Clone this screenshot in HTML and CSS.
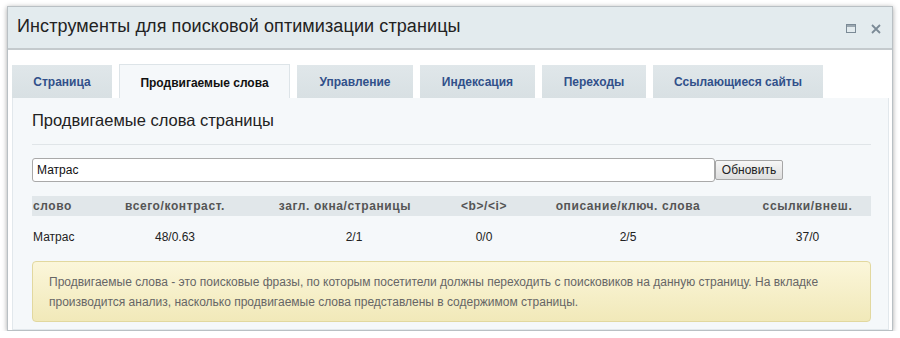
FILE: index.html
```html
<!DOCTYPE html>
<html lang="ru">
<head>
<meta charset="utf-8">
<title>SEO</title>
<link rel="stylesheet" href="styles.css">
</head>
<body>
<div class="window">
  <div class="titlebar">
    <div class="title">Инструменты для поисковой оптимизации страницы</div>
    <div class="controls">
      <svg class="ico" width="10" height="10" viewBox="0 0 10 10"><rect x="0.5" y="0.5" width="9" height="8" fill="none" stroke="#7b8a96" stroke-width="1"/><line x1="0" y1="2" x2="10" y2="2" stroke="#7b8a96" stroke-width="1.4"/></svg>
      <svg class="ico" width="10" height="10" viewBox="0 0 10 10"><path d="M1 1 L9 9 M9 1 L1 9" stroke="#7b8a96" stroke-width="1.8"/></svg>
    </div>
  </div>
  <div class="body">
    <div class="tabs">
      <div class="tab w1">Страница</div>
      <div class="tab active w2">Продвигаемые слова</div>
      <div class="tab w3">Управление</div>
      <div class="tab w4">Индексация</div>
      <div class="tab w5">Переходы</div>
      <div class="tab w6">Ссылающиеся сайты</div>
    </div>
    <div class="panel">
      <h2 class="heading">Продвигаемые слова страницы</h2>
      <div class="form">
        <input class="field" type="text" value="Матрас">
        <button class="btn">Обновить</button>
      </div>
      <div class="grid head">
        <div class="c1">слово</div>
        <div>всего/контраст.</div>
        <div>загл. окна/страницы</div>
        <div>&lt;b&gt;/&lt;i&gt;</div>
        <div>описание/ключ. слова</div>
        <div>ссылки/внеш.</div>
      </div>
      <div class="grid row">
        <div class="c1">Матрас</div>
        <div>48/0.63</div>
        <div class="off">2/1</div>
        <div>0/0</div>
        <div>2/5</div>
        <div>37/0</div>
      </div>
      <div class="note">Продвигаемые слова - это поисковые фразы, по которым посетители должны переходить с поисковиков на данную страницу. На вкладке производится анализ, насколько продвигаемые слова представлены в содержимом страницы.</div>
    </div>
  </div>
</div>
</body>
</html>
```
FILE: styles.css
```css
html, body { margin: 0; padding: 0; background: #fff; }
body { font-family: "Liberation Sans", Arial, sans-serif; padding: 6px 7px 0 7px; }
.window {
  width: 884px;
  height: 323px;
  border: 1px solid #b9c0c4;
  box-shadow: 0 1px 5px rgba(0,0,0,0.35);
  background: #fff;
  display: flex;
  flex-direction: column;
}
.titlebar {
  height: 41px;
  background: #e3ebee;
  border-bottom: 2px solid #c4cacd;
  display: flex;
  align-items: center;
  justify-content: space-between;
  padding: 0 11px 0 9px;
}
.title { font-size: 18px; color: #222; letter-spacing: 0.1px; margin-top: -2px; }
.controls { display: flex; gap: 15px; align-items: center; margin-top: 2px; }
.ico { display: block; }
.body { flex: 1; display: flex; flex-direction: column; padding: 15px 3px 0 4px; }
.tabs { display: flex; gap: 7px; height: 33px; }
.tab {
  background: linear-gradient(#e0e7ea, #d8e0e3);
  color: #31508a;
  font-weight: bold;
  font-size: 12px;
  display: flex;
  align-items: center;
  justify-content: center;
  padding-top: 1px;
}
.tab.active {
  background: #f5f8fa;
  color: #111;
  border: 1px solid #dde4e8;
  border-bottom: none;
  height: 34px;
  margin-top: -1px;
}
.w1 { width: 100px; }
.w2 { width: 169px; }
.w3 { width: 116px; }
.w4 { width: 115px; }
.w5 { width: 104px; }
.w6 { width: 170px; }
.panel {
  flex: 1;
  background: #f5f8fa;
  border: 1px solid #e2e8ec;
  border-top: none;
  padding: 13px 17px 0 19px;
}
.heading {
  margin: 0;
  font-size: 16.5px;
  font-weight: normal;
  color: #222;
  padding-bottom: 14px;
  border-bottom: 1px solid #e0e5e8;
}
.form { display: flex; align-items: center; margin-top: 13px; }
.field {
  width: 683px;
  height: 24px;
  box-sizing: border-box;
  border: 1px solid #a9a9a9;
  border-radius: 3px;
  padding: 0 4px;
  font-family: "Liberation Sans", Arial, sans-serif;
  font-size: 12px;
  color: #111;
  background: #fff;
}
.btn {
  width: 68px;
  height: 20px;
  border: 1px solid #a6a6a6;
  border-radius: 2px;
  background: linear-gradient(#f6f6f6, #dedede);
  font-family: "Liberation Sans", Arial, sans-serif;
  font-size: 12px;
  color: #222;
  padding: 0;
}
.grid {
  display: grid;
  grid-template-columns: 83px 120px 220px 58px 230px 129px;
  text-align: center;
  align-items: center;
}
.grid .c1 { text-align: left; padding-left: 1px; }
.head {
  margin-top: 14px;
  height: 20px;
  background: #e1e7ea;
  font-size: 12px;
  font-weight: bold;
  color: #555;
  letter-spacing: 0.6px;
}
.row { height: 42px; font-size: 12px; color: #222; }
.row .off { padding-left: 18px; }
.note {
  background: linear-gradient(#fbf6da, #f1e9b9);
  border: 1px solid #e2d89f;
  border-radius: 4px;
  padding: 10px 16px 9px 16px;
  font-size: 12px;
  line-height: 20px;
  color: #666;
  margin-top: 3px;
}
```
